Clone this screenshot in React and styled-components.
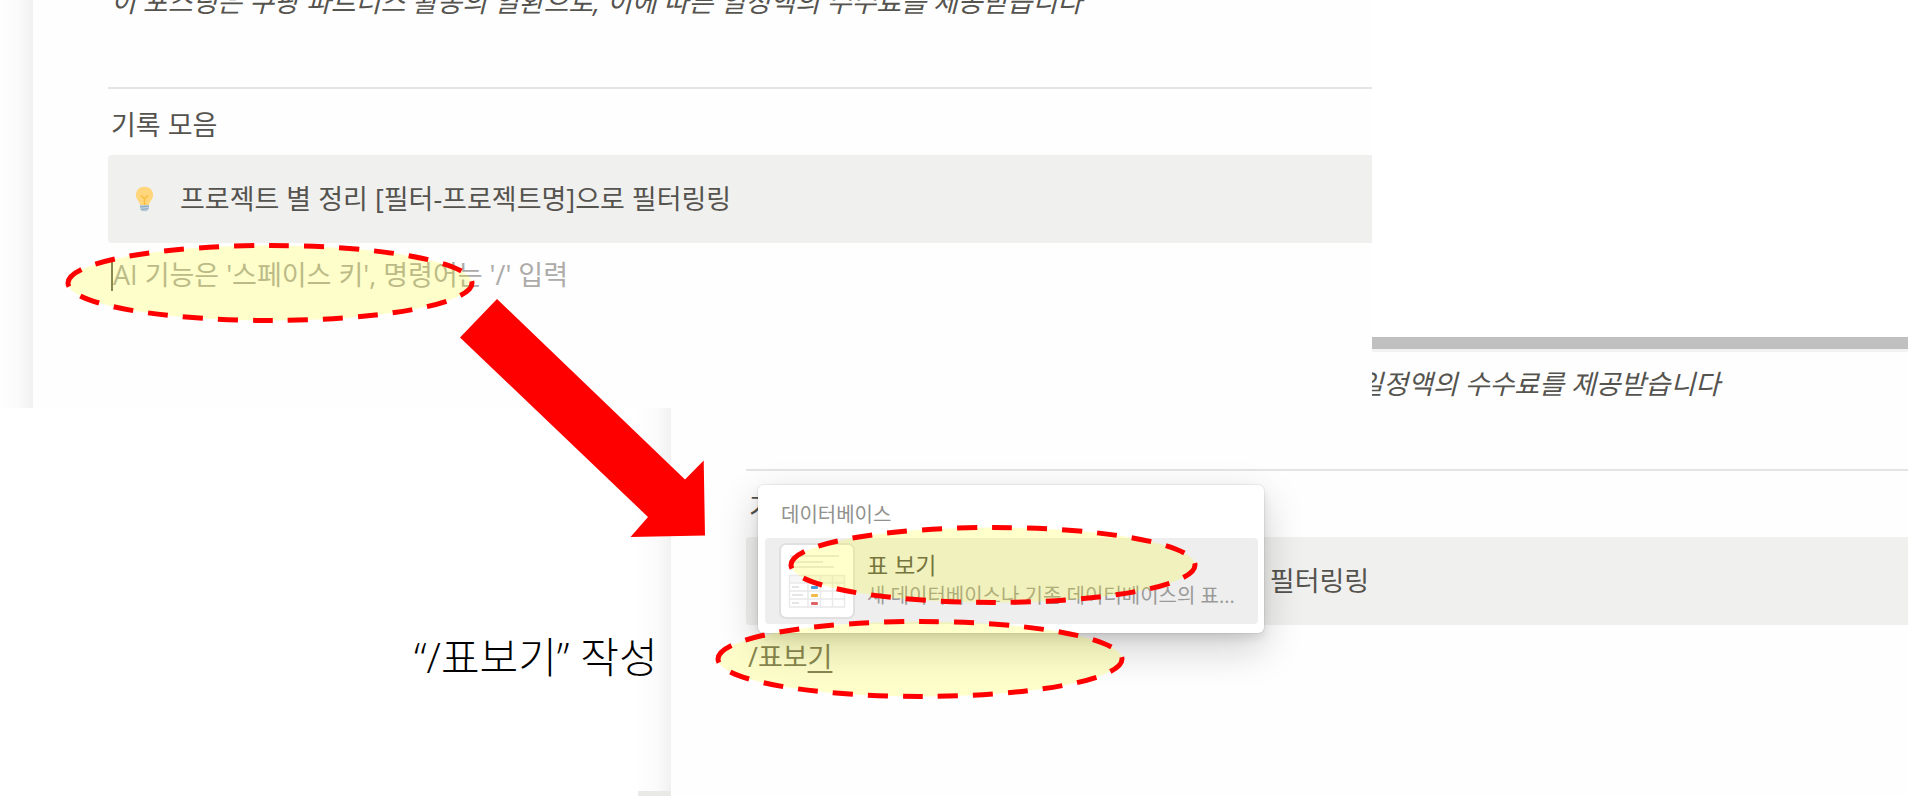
import React from "react";
import styled, { createGlobalStyle, css } from "styled-components";

const GlobalStyle = createGlobalStyle`
  *, *::before, *::after { box-sizing: border-box; }
  body {
    margin: 0;
    background: #fff;
    color: #55534e;
    font-family: "Open Sans", "Noto Sans CJK KR", sans-serif;
  }
  p, h2, h3 { margin: 0; font-weight: 400; }
`;

const Slide = styled.main`
  position: relative;
  display: grid;
  grid-template-columns: 638px minmax(0, 1fr) 536px;
  grid-template-rows: 337px 71px 1fr;
  min-height: 100vh;
  overflow: hidden;
`;

const Shot = styled.section`
  position: relative;
  display: grid;
  grid-template-columns: 33px minmax(0, 1fr);
  min-width: 0;
  background: #fefefe;
  ${(p) =>
    p.$place === "front"
      ? css`
          grid-area: 1 / 1 / 3 / 3;
          z-index: 1;
          overflow: hidden;
        `
      : css`
          grid-area: 2 / 2 / 4 / 4;
        `}
`;

const Gutter = styled.div`
  background: linear-gradient(90deg, #fefefe 0%, #fbfbfb 55%, #f1f1f1 100%);
  border-bottom: ${(p) => (p.$footer ? "5px solid #e9e9e6" : "0")};
`;

const Page = styled.div`
  min-width: 0;
  margin-top: ${(p) => (p.$scrolled ? "-45px" : "0")};
`;

const TopBar = styled.div`
  height: 15px;
  background: #c0c0c0;
  border-bottom: 3px solid #f2f2f2;
`;

const Column = styled.div`
  display: flex;
  flex-direction: column;
  padding: 12px 0 0 75px;
`;

const Notice = styled.p`
  padding-left: 3px;
  font-size: 27px;
  line-height: 40px;
  font-style: italic;
  white-space: nowrap;
`;

const Divider = styled.hr`
  width: 100%;
  height: 2px;
  margin: 65px 0 16px;
  border: 0;
  background: #e4e4e3;
`;

const Heading = styled.h2`
  padding-left: 3px;
  font-size: 27px;
  line-height: 40px;
`;

const Callout = styled.div`
  display: flex;
  align-items: center;
  gap: 26px;
  height: 88px;
  margin-top: 10px;
  padding-left: 27px;
  border-radius: ${(p) => (p.$cropped ? "4px 0 0 4px" : "4px")};
  background: #f0f0ee;
  font-size: 27px;
  line-height: 40px;
  white-space: nowrap;
`;

const lineText = css`
  width: 100%;
  height: 32px;
  margin-top: 16px;
  padding: 0 0 0 2px;
  font: inherit;
  font-size: 27px;
  line-height: 32px;
  outline: none;
`;

const CommandInput = styled.input`
  ${lineText}
  margin-left: 3px;
  padding-left: 0;
  border: 0;
  border-left: 2px solid #6b6963;
  background: transparent;
  &::placeholder {
    color: #acaba9;
    opacity: 1;
  }
`;

const CommandText = styled.div`
  ${lineText}
  color: #6b6963;
  u { text-underline-offset: 4px; text-decoration-thickness: 2px; }
`;

const Menu = styled.div`
  position: absolute;
  top: 148px;
  left: 120px;
  width: 506px;
  padding: 12px 6px 9px 7px;
  border-radius: 6px;
  background: #fff;
  box-shadow: 0 0 0 1px rgba(15, 15, 15, 0.05), 0 5px 10px rgba(15, 15, 15, 0.1),
    0 15px 40px rgba(15, 15, 15, 0.2);
`;

const MenuTitle = styled.h3`
  padding-left: 16px;
  color: #91918e;
  font-size: 20px;
  line-height: 36px;
  margin-bottom: 5px;
`;

const MenuItem = styled.button`
  display: flex;
  align-items: center;
  gap: 14px;
  width: 100%;
  height: 86px;
  padding: 0 16px;
  border: 0;
  border-radius: 4px;
  background: #eeeeee;
  color: #55534e;
  font: inherit;
  text-align: left;
`;

const ItemText = styled.span`
  display: flex;
  flex-direction: column;
  min-width: 0;
  padding-bottom: 2px;
`;

const ItemTitle = styled.span`
  font-size: 23px;
  line-height: 32px;
`;

const ItemNote = styled.span`
  overflow: hidden;
  color: #9a9a98;
  font-size: 20px;
  line-height: 30px;
  white-space: nowrap;
`;

const Thumb = styled.svg`
  flex: none;
  border-radius: 5px;
  background: #fff;
  box-shadow: 0 0 0 2px #e0e0e0;
`;

const Caption = styled.p`
  grid-area: 3 / 1;
  padding: 217px 0 0 414px;
  color: #000;
  font-size: 42px;
  font-weight: 300;
  line-height: 64px;
  white-space: nowrap;
  z-index: 1;
`;

const Ring = styled.svg`
  position: absolute;
  z-index: 2;
  left: ${(p) => p.$x}px;
  top: ${(p) => p.$y}px;
  pointer-events: none;
`;

const Arrow = styled.svg`
  position: absolute;
  z-index: 2;
  left: 460px;
  top: 299px;
  pointer-events: none;
`;

function BulbIcon() {
  return (
    <svg width="19" height="26" viewBox="0 0 19 26" aria-hidden="true">
      <path d="M9.500.8C4.500.8.900 4.300.900 8.900c0 3.600 2 5.200 3.200 7.300.6 1 .8 2.100.9 3.100h9c.1-1 .3-2.100.9-3.100 1.200-2.100 3.200-3.700 3.200-7.300C18.100 4.300 14.500.8 9.500.8z" fill="#ffd67c" />
      <path d="M6 9.500l3.500 3.200L13 9.500M9.500 12.700V19" fill="none" stroke="#f9bd3d" strokeWidth="1.500" />
      <path d="M5 19h9v3.800l-2 2.400H7l-2-2.400z" fill="#b9cddb" />
      <path d="M5 21l9-1M6 23.600l7-1" stroke="#8ea9bf" strokeWidth="1" />
    </svg>
  );
}

function TableThumb() {
  return (
    <Thumb width="72" height="72" viewBox="0 0 72 72" aria-hidden="true">
      <g fill="#e9e9e9">
        <rect x="9" y="10" width="49" height="2" />
        <rect x="9" y="16" width="33" height="2" />
        <rect x="9" y="21" width="44" height="2" />
      </g>
      <rect x="8" y="31" width="56" height="7" fill="#f7f7f7" />
      <path d="M8.500 30.500h55v31.500h-55zM8 38h56M8 46h56M8 54h56M27 30v32M39.500 30v32M51.500 30v32" fill="none" stroke="#e9e9e9" strokeWidth="1.500" />
      <g fill="#e6e6e6">
        <rect x="11" y="41" width="7" height="2" />
        <rect x="11" y="49" width="11" height="2" />
        <rect x="11" y="57" width="7" height="2" />
      </g>
      <rect x="30" y="41" width="7" height="3" rx="1" fill="#4a9bd9" />
      <rect x="30" y="49" width="7" height="3" rx="1" fill="#f2bb45" />
      <rect x="30" y="57" width="7" height="3" rx="1" fill="#e06464" />
    </Thumb>
  );
}

function HighlightRing({ x, y }) {
  return (
    <Ring $x={x} $y={y} width="410" height="80" viewBox="0 0 410 80" aria-hidden="true">
      <path
        d="M3 40A202 37.500 0 0 1 407 40A202 37.500 0 0 1 3 40"
        fill="rgba(255,255,0,0.2)"
        stroke="#f00"
        strokeWidth="5"
        strokeDasharray="20 15"
      />
    </Ring>
  );
}

function NotePage({ scrolled, children }) {
  return (
    <Page $scrolled={scrolled}>
      <TopBar />
      <Column>
        <Notice>이 포스팅은 쿠팡 파트너스 활동의 일환으로, 이에 따른 일정액의 수수료를 제공받습니다</Notice>
        <Divider />
        <Heading>기록 모음</Heading>
        <Callout $cropped>
          <BulbIcon />
          <span>프로젝트 별 정리 [필터-프로젝트명]으로 필터링링</span>
        </Callout>
        {children}
      </Column>
    </Page>
  );
}

export default function App() {
  return (
    <>
      <GlobalStyle />
      <Slide>
        <Shot $place="front">
          <Gutter />
          <NotePage scrolled>
            <CommandInput aria-label="명령어" placeholder="AI 기능은 '스페이스 키', 명령어는 '/' 입력" />
          </NotePage>
        </Shot>
        <Shot $place="back">
          <Gutter $footer />
          <NotePage>
            <CommandText role="textbox" aria-label="명령어" contentEditable suppressContentEditableWarning>
              /표보<u>기</u>
            </CommandText>
          </NotePage>
          <Menu>
            <MenuTitle>데이터베이스</MenuTitle>
            <MenuItem type="button">
              <TableThumb />
              <ItemText>
                <ItemTitle>표 보기</ItemTitle>
                <ItemNote>새 데이터베이스나 기존 데이터베이스의 표...</ItemNote>
              </ItemText>
            </MenuItem>
          </Menu>
        </Shot>
        <Caption>“/표보기” 작성</Caption>
        <HighlightRing x={65} y={243} />
        <HighlightRing x={788} y={525} />
        <HighlightRing x={715} y={619} />
        <Arrow width="246" height="239" viewBox="0 0 246 239" aria-hidden="true">
          <path d="M37 0L225 180.500L243.700 161.500L245 236.500L170.500 238L188 218L0 38.500z" fill="#f00" />
        </Arrow>
      </Slide>
    </>
  );
}
